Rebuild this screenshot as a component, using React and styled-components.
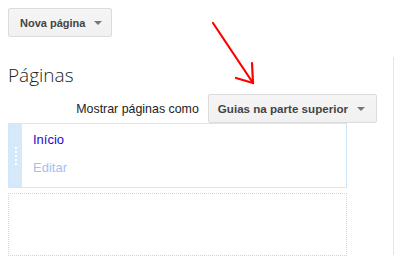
import styled, { createGlobalStyle } from "styled-components";

const Global = createGlobalStyle`
  body {
    margin: 0;
    background: #fff;
    font-family: "Liberation Sans", Arial, sans-serif;
  }
`;

const Page = styled.div`
  position: relative;
  width: 400px;
  height: 261px;
  display: flex;
  padding: 8px 0 0 8px;
  box-sizing: border-box;
  overflow: hidden;
`;

const Main = styled.div`
  width: 369px;
  display: flex;
  flex-direction: column;
`;

const Divider = styled.div`
  width: 1px;
  background: #e5e5e5;
  margin: 49px 0 6px 16px;
`;

const Button = styled.button`
  display: inline-flex;
  align-items: center;
  height: 29px;
  padding: 0 ${(p) => p.right || 11}px 0 ${(p) => p.left || 11}px;
  border: 1px solid #dcdcdc;
  border-radius: 2px;
  background: linear-gradient(#f5f5f5, #f1f1f1);
  color: #444;
  font-family: "Liberation Sans", Arial, sans-serif;
  font-weight: bold;
  font-size: ${(p) => p.size || 11}px;
  box-sizing: border-box;
  cursor: default;
`;

const Caret = styled.span`
  width: 0;
  height: 0;
  margin-left: ${(p) => p.gap || 12}px;
  border-left: 4px solid transparent;
  border-right: 4px solid transparent;
  border-top: 4px solid #777;
`;

const Heading = styled.h2`
  margin: 25px 0 0 0;
  font-family: "Open Sans", "Liberation Sans", sans-serif;
  font-weight: 300;
  font-size: 19px;
  line-height: 26px;
  color: #222;
`;

const ShowRow = styled.div`
  display: flex;
  justify-content: flex-end;
  align-items: center;
  gap: 9px;
  margin-top: 6px;
`;

const Label = styled.span`
  font-size: 12.4px;
  color: #222;
`;

const List = styled.div`
  width: 339px;
  display: flex;
  flex-direction: column;
  gap: 5px;
`;

const Item = styled.div`
  display: flex;
  height: 65px;
  border: 1px solid #cfe7fa;
  box-sizing: border-box;
`;

const Handle = styled.div`
  width: 13px;
  background: #d6e9fb;
  display: flex;
  flex-direction: column;
  align-items: center;
  justify-content: center;
  gap: 2px;
`;

const Dot = styled.span`
  width: 2px;
  height: 2px;
  background: #fff;
`;

const ItemBody = styled.div`
  display: flex;
  flex-direction: column;
  padding: 8px 0 0 11px;
  gap: 13px;
`;

const Title = styled.span`
  font-size: 13px;
  color: #1a0dcc;
`;

const Edit = styled.span`
  font-size: 13px;
  color: #a4bff0;
`;

const DropZone = styled.div`
  height: 63px;
  border: 1px dotted #c9d6f2;
  box-sizing: border-box;
`;

const Annotation = styled.svg`
  position: absolute;
  left: 0;
  top: 0;
  pointer-events: none;
`;

export default function App() {
  return (
    <>
      <Global />
      <Page>
        <Main>
          <div>
            <Button left={11} right={9}>
              Nova página
              <Caret gap={9} />
            </Button>
          </div>
          <Heading>Páginas</Heading>
          <ShowRow>
            <Label>Mostrar páginas como</Label>
            <Button size={11.6} left={9} right={11}>
              Guias na parte superior
              <Caret gap={9} />
            </Button>
          </ShowRow>
          <List>
            <Item>
              <Handle>
                {[0, 1, 2, 3, 4].map((i) => (
                  <Dot key={i} />
                ))}
              </Handle>
              <ItemBody>
                <Title>Início</Title>
                <Edit>Editar</Edit>
              </ItemBody>
            </Item>
            <DropZone />
          </List>
        </Main>
        <Divider />
        <Annotation width="400" height="261">
          <g stroke="#f00" strokeWidth="2.2" fill="none" strokeLinecap="round">
            <line x1="213" y1="23" x2="253" y2="83" />
            <line x1="253" y1="83" x2="236" y2="78" />
            <line x1="253" y1="83" x2="252" y2="63" />
          </g>
        </Annotation>
      </Page>
    </>
  );
}
